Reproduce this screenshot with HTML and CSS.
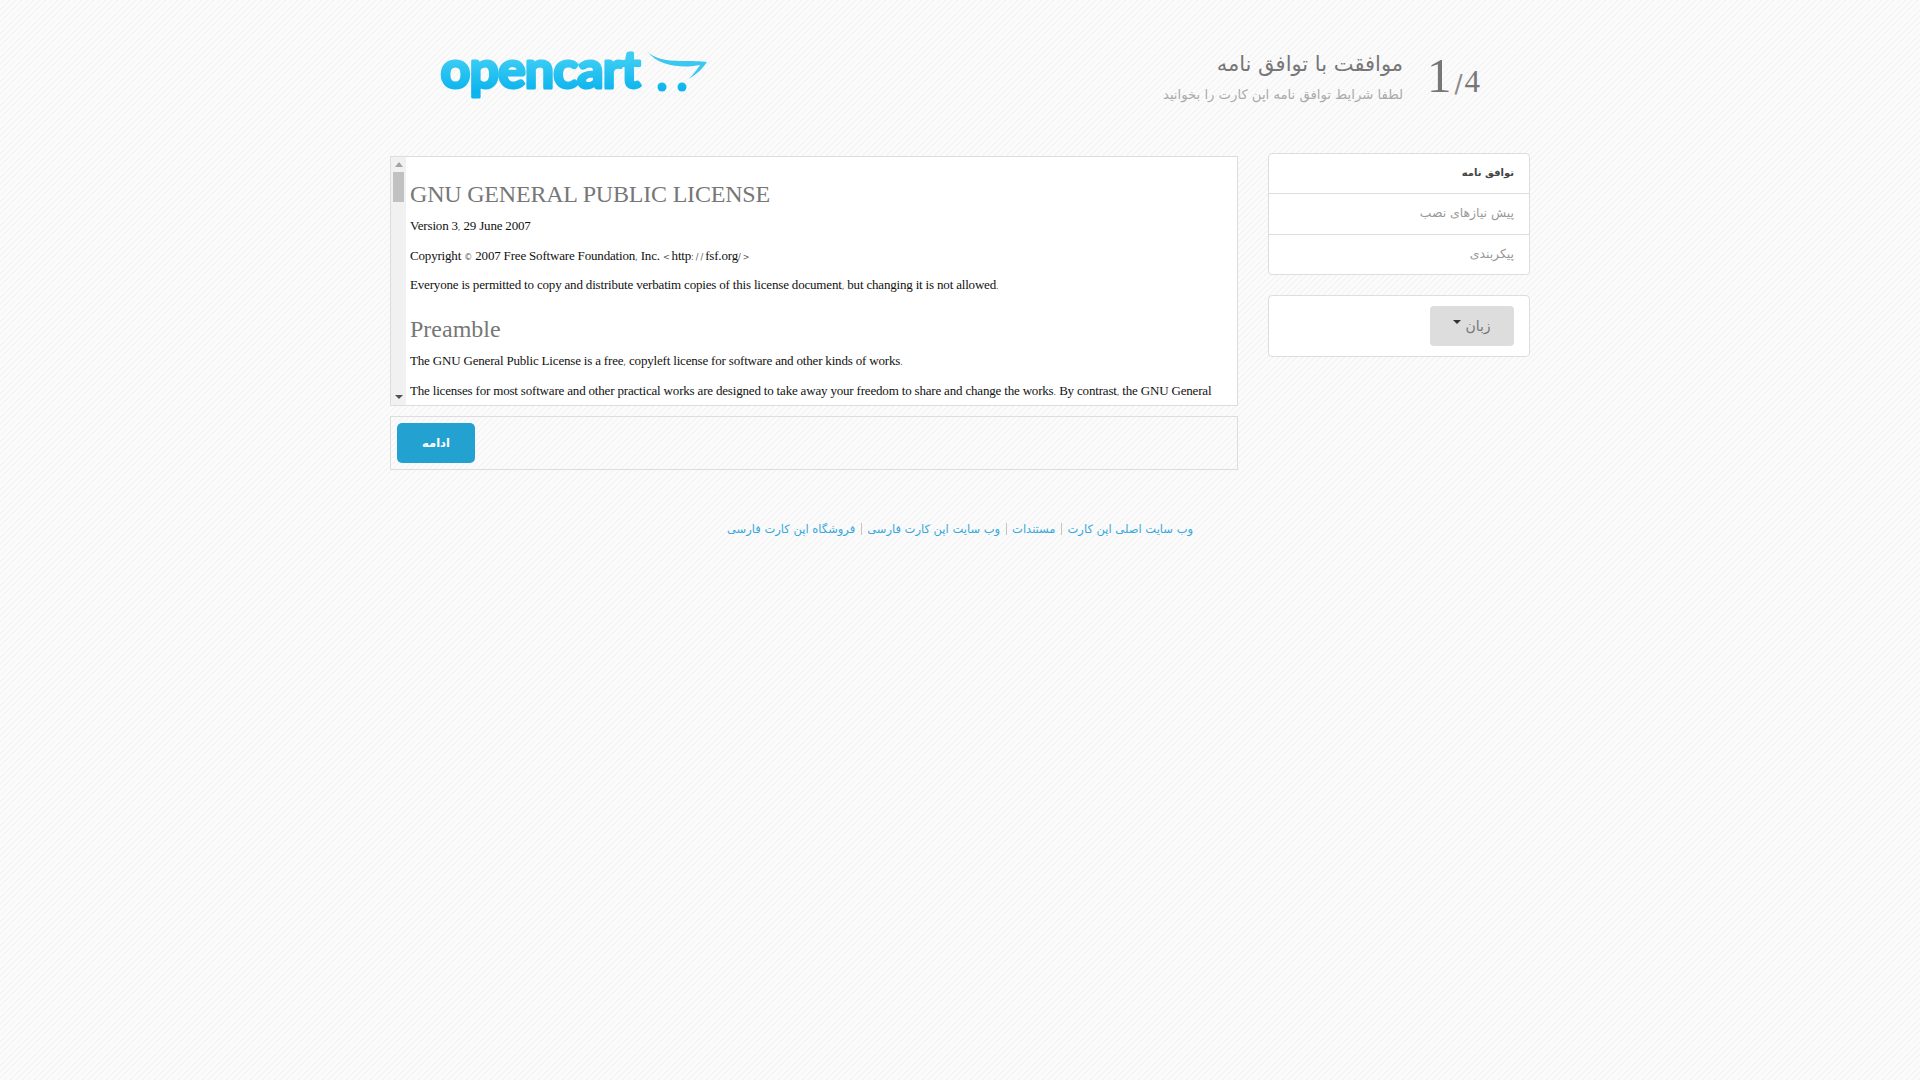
FILE: index.html
```html
<!DOCTYPE html>
<html lang="fa" dir="rtl">
<head>
<meta charset="utf-8">
<title>نصب اپن کارت</title>
<link rel="stylesheet" href="styles.css">
</head>
<body>
<div class="container">
  <header class="page-head">
    <div class="step" dir="ltr"><span class="step-now">1</span><span class="step-sep">/</span><span class="step-all">4</span></div>
    <div class="titles">
      <h1 class="title">موافقت با توافق نامه</h1>
      <p class="subtitle">لطفا شرایط توافق نامه اپن کارت را بخوانید</p>
    </div>
    <a class="logo" href="#" dir="ltr">
      <svg class="logo-svg" width="272" height="80" viewBox="0 -20 272 80">
        <defs>
          <linearGradient id="lg" gradientUnits="userSpaceOnUse" x1="0" y1="8" x2="0" y2="40">
            <stop offset="0" stop-color="#3dcdf4"/>
            <stop offset="1" stop-color="#0db5ee"/>
          </linearGradient>
        </defs>
        <text class="logo-word" x="3.5" y="38" textLength="200" lengthAdjust="spacing" fill="url(#lg)" stroke="url(#lg)">opencart</text>
        <path d="M210 1C216 8 228 11 245 11C255 11 264 11 270 12C266 18 260 24 252 29C258 22 262 17 263 15C250 18 222 18 210 1Z" fill="#3ac8f0"/>
        <circle cx="225" cy="37" r="4.5" fill="url(#lg)"/>
        <circle cx="245" cy="37" r="4.5" fill="url(#lg)"/>
      </svg>
    </a>
  </header>
  <div class="layout">
    <aside class="side">
      <ul class="steps">
        <li class="steps-item is-active">توافق نامه</li>
        <li class="steps-item">پیش نیازهای نصب</li>
        <li class="steps-item">پیکربندی</li>
      </ul>
      <div class="lang-panel">
        <button class="lang-btn" type="button"><span>زبان</span><i class="caret"></i></button>
      </div>
    </aside>
    <main class="main">
      <div class="license" dir="ltr">
        <div class="scrollbar" aria-hidden="true">
          <i class="arrow-up"></i>
          <i class="thumb"></i>
          <i class="arrow-down"></i>
        </div>
        <div class="license-body">
          <h2 class="lic-h1">GNU GENERAL PUBLIC LICENSE</h2>
          <p>Version 3<span class="pn">,</span> 29 June 2007</p>
          <p>Copyright <span class="pn">©</span> 2007 Free Software Foundation<span class="pn">,</span> Inc. <span class="pn pn-wide">&lt;</span>http<span class="pn pn-wide">://</span>fsf.org<span class="pn pn-wide">/&gt;</span></p>
          <p>Everyone is permitted to copy and distribute verbatim copies of this license document<span class="pn">,</span> but changing it is not allowed<span class="pn">.</span></p>
          <h3 class="lic-h2">Preamble</h3>
          <p>The GNU General Public License is a free<span class="pn">,</span> copyleft license for software and other kinds of works<span class="pn">.</span></p>
          <p>The licenses for most software and other practical works are designed to take away your freedom to share and change the works<span class="pn">.</span> By contrast<span class="pn">,</span> the GNU General</p>
        </div>
      </div>
      <div class="actions">
        <button class="btn-next" type="button">ادامه</button>
      </div>
    </main>
  </div>
  <footer class="links">
    <a href="#">وب سایت اصلی اپن کارت</a><span class="sep"></span>
    <a href="#">مستندات</a><span class="sep"></span>
    <a href="#">وب سایت اپن کارت فارسی</a><span class="sep"></span>
    <a href="#">فروشگاه اپن کارت فارسی</a>
  </footer>
</div>
</body>
</html>
```
FILE: styles.css
```css
* { box-sizing: border-box; }
html, body { margin: 0; height: 100%; }
body {
  min-height: 1080px;
  font-family: "DejaVu Sans", "Noto Sans", sans-serif;
  color: #777;
  background-color: #f6f6f6;
  background-image: linear-gradient(135deg, #fcfcfc 16.67%, #f6f6f6 16.67%, #f6f6f6 50%, #fcfcfc 50%, #fcfcfc 66.67%, #f6f6f6 66.67%);
  background-size: 6px 6px;
}
.container { width: 1170px; margin: 0 auto; padding: 0 15px; }

.page-head { display: flex; align-items: flex-start; height: 153px; padding-right: 44px; }
.step { width: 59px; margin-top: 51px; font-family: "Liberation Serif", serif; color: #777; white-space: nowrap; line-height: 1; }
.step-now { font-size: 49px; }
.step-sep { font-size: 24px; font-family: "DejaVu Sans", sans-serif; margin: 0 2px 0 3px; color: #888; }
.step-all { font-size: 31px; }
.titles { margin-right: 24px; margin-top: 49px; }
.title { margin: 0; font-size: 21px; font-weight: 400; color: #777; line-height: 30px; }
.subtitle { margin: 6px 0 0; font-size: 13.2px; color: #aaa; line-height: 20px; }
.logo { display: block; margin-right: auto; margin-top: 30px; margin-left: 47px; }
.logo-svg { display: block; }
.logo-word { font-family: "Lato", sans-serif; font-weight: 700; font-size: 52px; stroke-width: 3; stroke-linejoin: round; stroke-linecap: round; }

.layout { display: flex; gap: 30px; align-items: flex-start; }
.side { width: 262px; flex: none; }
.main { width: 848px; margin-top: 3px; }

.steps { list-style: none; margin: 0; padding: 0; background: #fff; border: 1px solid #ddd; border-radius: 4px; }
.steps-item { height: 40.5px; padding: 0 15px; font-size: 12.4px; line-height: 37px; color: #999; border-top: 1px solid #ddd; }
.steps-item:first-child { border-top: 0; height: 39px; }
.steps-item.is-active { color: #444; font-size: 10px; font-weight: 700; }

.lang-panel { margin-top: 20px; padding: 10px 15px; background: #fff; border: 1px solid #ddd; border-radius: 4px; height: 62px; }
.lang-btn { display: flex; align-items: center; justify-content: center; gap: 4px; width: 84px; height: 40px; border: 0; border-radius: 4px; background: #ddd; color: #777; font: inherit; font-size: 14px; }
.caret { display: block; width: 0; height: 0; margin-bottom: 8px; border-top: 4px solid #333; border-left: 4px solid transparent; border-right: 4px solid transparent; }

.license { display: flex; height: 250px; background: #fff; border: 1px solid #ddd; }
.scrollbar { flex: none; display: flex; flex-direction: column; align-items: center; width: 15px; padding: 5px 0 6px; background: #f1f1f1; }
.arrow-up { width: 0; height: 0; border-bottom: 5px solid #a3a3a3; border-left: 4px solid transparent; border-right: 4px solid transparent; }
.arrow-down { margin-top: auto; width: 0; height: 0; border-top: 4px solid #505050; border-left: 4px solid transparent; border-right: 4px solid transparent; }
.thumb { display: block; width: 11px; height: 30px; margin-top: 5px; background: #c1c1c1; }
.license-body { flex: 1; min-width: 0; padding: 4px 4px 0; font-family: "Liberation Serif", serif; color: #111; font-size: 13px; line-height: 19.5px; letter-spacing: -0.18px; }
.license-body p { margin: 0 0 10px; white-space: nowrap; }
.pn { font-family: "DejaVu Sans", sans-serif; font-size: 8px; line-height: 0; color: #555; letter-spacing: 0; }
.pn-wide { letter-spacing: 2px; }
.lic-h1 { margin: 20px 0 9px; font-size: 24px; line-height: 26px; font-weight: 400; letter-spacing: -0.2px; color: #777; }
.lic-h2 { margin: 21px 0 9.5px; font-size: 24px; line-height: 26px; font-weight: 400; letter-spacing: 0; color: #777; }

.actions { margin-top: 10px; height: 54px; padding: 6px; border: 1px solid #ddd; display: flex; justify-content: flex-end; }
.btn-next { width: 78px; height: 40px; border: 0; border-radius: 5px; background: #23a1d1; color: #fff; font: inherit; font-size: 11.5px; font-weight: 700; }

.links { display: flex; justify-content: center; align-items: center; margin-top: 49px; font-size: 11.5px; line-height: 20px; }
.links a { color: #35a8dc; text-decoration: none; }
.sep { width: 1px; height: 12px; margin: 0 5.5px; background: #c4c4c4; }
```
